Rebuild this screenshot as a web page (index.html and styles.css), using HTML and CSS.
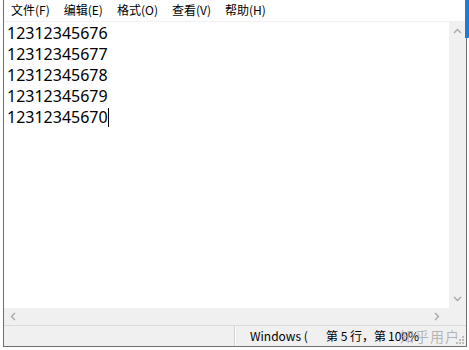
FILE: index.html
```html
<!DOCTYPE html>
<html lang="zh-CN">
<head>
  <meta charset="UTF-8" />
  <title>无标题 - 记事本</title>
  <link rel="stylesheet" href="styles.css">
</head>
<body>

  <div class="window">
    <nav class="menubar">
      <span class="menu">文件(F)</span>
      <span class="menu">编辑(E)</span>
      <span class="menu">格式(O)</span>
      <span class="menu">查看(V)</span>
      <span class="menu">帮助(H)</span>
    </nav>

    <div class="client">
      <div class="edit-row">
        <div class="editor">
          <div class="line">12312345676</div>
          <div class="line">12312345677</div>
          <div class="line">12312345678</div>
          <div class="line">12312345679</div>
          <div class="line">12312345670<span class="caret"></span></div>
        </div>
        <div class="vscroll">
          <svg class="arrow" width="9" height="6" viewBox="0 0 9 6"><path d="M1 5 L4.5 1.5 L8 5" fill="none" stroke="#a6a6a6" stroke-width="1.3"/></svg>
          <svg class="arrow" width="9" height="6" viewBox="0 0 9 6"><path d="M1 1 L4.5 4.5 L8 1" fill="none" stroke="#a6a6a6" stroke-width="1.3"/></svg>
        </div>
      </div>
      <div class="hscroll-row">
        <div class="hscroll">
          <svg class="arrow" width="6" height="9" viewBox="0 0 6 9"><path d="M5 1 L1.5 4.5 L5 8" fill="none" stroke="#a6a6a6" stroke-width="1.3"/></svg>
          <svg class="arrow" width="6" height="9" viewBox="0 0 6 9"><path d="M1 1 L4.5 4.5 L1 8" fill="none" stroke="#a6a6a6" stroke-width="1.3"/></svg>
        </div>
        <div class="corner"></div>
      </div>
    </div>

    <footer class="statusbar">
      <div class="panel panel-empty"></div>
      <div class="panel panel-eol">Windows (CRLF)</div>
      <div class="panel panel-pos">第 5 行，第 11 列</div>
      <div class="panel panel-zoom">100%</div>
      <svg class="grip" width="8" height="8" viewBox="0 0 8 8">
        <rect x="6" y="0" width="2" height="2" fill="#bdbdbd"/>
        <rect x="3" y="3" width="2" height="2" fill="#bdbdbd"/>
        <rect x="6" y="3" width="2" height="2" fill="#bdbdbd"/>
        <rect x="0" y="6" width="2" height="2" fill="#bdbdbd"/>
        <rect x="3" y="6" width="2" height="2" fill="#bdbdbd"/>
        <rect x="6" y="6" width="2" height="2" fill="#bdbdbd"/>
      </svg>
      <span class="watermark">知乎用户</span>
    </footer>
  </div>

  <div class="accent"></div>

</body>
</html>
```

FILE: styles.css
```css
* {
  margin: 0;
  padding: 0;
  box-sizing: border-box;
}

body {
  background: #fff;
  width: 469px;
  height: 350px;
  overflow: hidden;
  position: relative;
  font-family: "Noto Sans CJK SC", "Noto Sans", sans-serif;
}

.window {
  margin-left: 3px;
  width: 464px;
  height: 347px;
  border: 1px solid #6f6f6f;
  border-top: none;
  display: flex;
  flex-direction: column;
  background: #fff;
}

/* Menu */
.menubar {
  height: 22px;
  border-bottom: 1px solid #f0f0f0;
  display: flex;
  align-items: center;
  font-size: 12px;
  color: #000;
}

.menu {
  padding: 0 7px 1px;
  line-height: 20px;
}

/* Zone d'edition */
.client {
  flex: 1;
  display: flex;
  flex-direction: column;
}

.edit-row {
  flex: 1;
  display: flex;
}

.editor {
  flex: 1;
  padding: 1px 0 0 3px;
  font-family: "Noto Sans", sans-serif;
  font-size: 16px;
  line-height: 21px;
  color: #000;
}

.caret {
  display: inline-block;
  width: 1px;
  height: 19px;
  background: #000;
  vertical-align: -4px;
}

.vscroll {
  width: 17px;
  background: #f0f0f0;
  display: flex;
  flex-direction: column;
  justify-content: space-between;
  align-items: center;
  padding: 6px 0 6px;
}

.hscroll-row {
  height: 17px;
  display: flex;
}

.hscroll {
  flex: 1;
  background: #f0f0f0;
  display: flex;
  justify-content: space-between;
  align-items: center;
  padding: 0 9px 0 6px;
}

.corner {
  width: 17px;
  background: #f0f0f0;
}

.arrow {
  display: block;
}

/* Barre d'etat */
.statusbar {
  height: 21px;
  border-top: 1px solid #dadada;
  background: #f0f0f0;
  display: flex;
  align-items: center;
  font-size: 12px;
  color: #000;
  position: relative;
}

.panel {
  height: 100%;
  white-space: nowrap;
  overflow: hidden;
  line-height: 19px;
}

.panel-empty {
  width: 231px;
  border-right: 1px solid #d4d4d4;
  box-shadow: 1px 0 0 #fff;
}

.panel-eol {
  width: 73px;
  padding-left: 15px;
}

.panel-pos {
  width: 80px;
  padding-left: 18px;
}

.panel-zoom {
  width: 50px;
}

.grip {
  position: absolute;
  right: 2px;
  bottom: 2px;
}

.watermark {
  position: absolute;
  left: 396px;
  top: 1px;
  font-size: 14px;
  line-height: 18px;
  color: rgba(160, 160, 160, 0.75);
  letter-spacing: 1px;
}

.accent {
  position: absolute;
  top: 0;
  right: 0;
  width: 4px;
  height: 38px;
  background: #1f7ad8;
}
```
